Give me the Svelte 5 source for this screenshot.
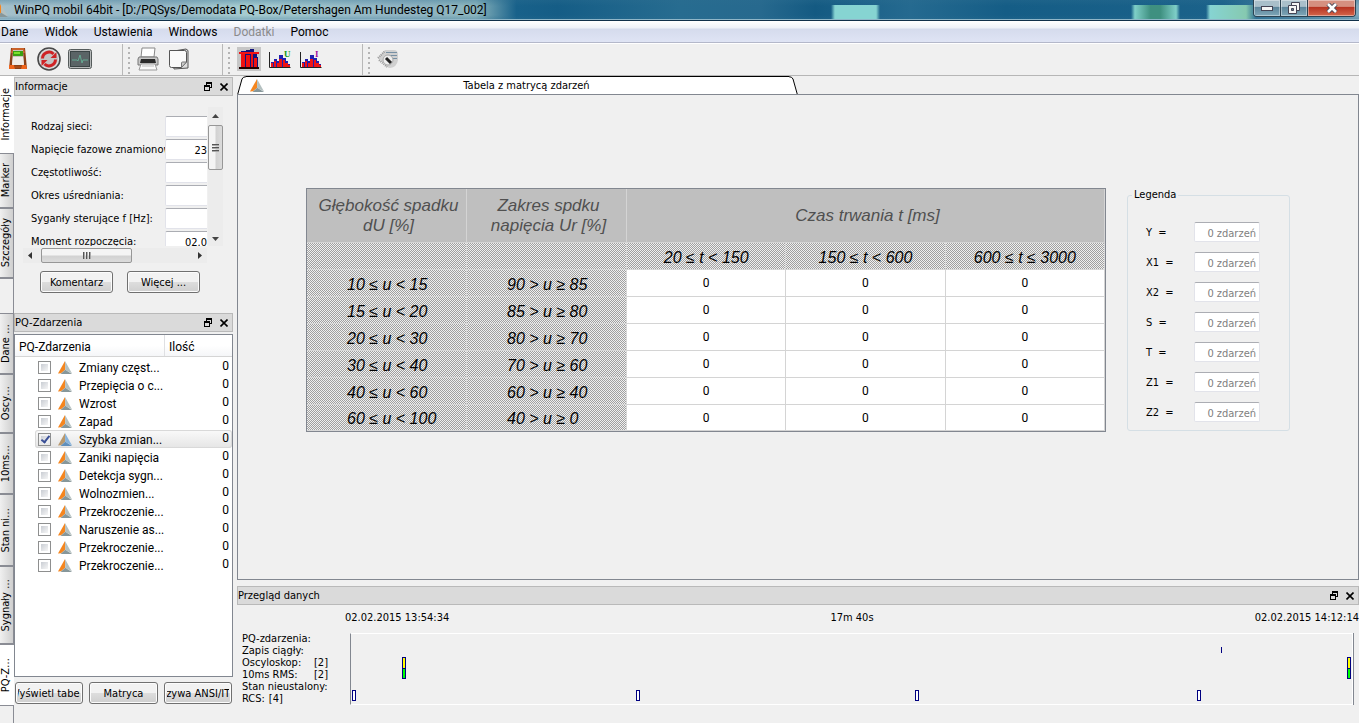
<script lang="ts">
  const menu = ['Dane', 'Widok', 'Ustawienia', 'Windows', 'Dodatki', 'Pomoc'];

  const tabsTop = [
    { label: 'Informacje', height: 78, active: true },
    { label: 'Marker', height: 55, active: false },
    { label: 'Szczegóły', height: 70, active: false }
  ];
  const tabsBottom = [
    { label: 'Dane …', height: 61, active: false },
    { label: 'Oscy…', height: 59, active: false },
    { label: '10ms…', height: 61, active: false },
    { label: 'Stan ni…', height: 72, active: false },
    { label: 'Sygnały …', height: 78, active: false },
    { label: 'PQ-Z…', height: 61, active: true }
  ];

  const fields = [
    { label: 'Rodzaj sieci:', value: '' },
    { label: 'Napięcie fazowe znamionow', value: '23' },
    { label: 'Częstotliwość:', value: '' },
    { label: 'Okres uśredniania:', value: '' },
    { label: 'Syganły sterujące f [Hz]:', value: '' },
    { label: 'Moment rozpoczęcia:', value: '02.0' }
  ];

  let events = $state([
    { name: 'Zmiany częst...', checked: false },
    { name: 'Przepięcia o c...', checked: false },
    { name: 'Wzrost', checked: false },
    { name: 'Zapad', checked: false },
    { name: 'Szybka zmian...', checked: true },
    { name: 'Zaniki napięcia', checked: false },
    { name: 'Detekcja sygn...', checked: false },
    { name: 'Wolnozmien...', checked: false },
    { name: 'Przekroczenie...', checked: false },
    { name: 'Naruszenie as...', checked: false },
    { name: 'Przekroczenie...', checked: false },
    { name: 'Przekroczenie...', checked: false }
  ]);
  const selected = 4;

  const ranges = ['20 ≤ t < 150', '150 ≤ t < 600', '600 ≤ t ≤ 3000'];
  const matrix = [
    { du: '10 ≤ u < 15', ur: '90 > u ≥ 85', counts: [0, 0, 0] },
    { du: '15 ≤ u < 20', ur: '85 > u ≥ 80', counts: [0, 0, 0] },
    { du: '20 ≤ u < 30', ur: '80 > u ≥ 70', counts: [0, 0, 0] },
    { du: '30 ≤ u < 40', ur: '70 > u ≥ 60', counts: [0, 0, 0] },
    { du: '40 ≤ u < 60', ur: '60 > u ≥ 40', counts: [0, 0, 0] },
    { du: '60 ≤ u < 100', ur: '40 > u ≥ 0', counts: [0, 0, 0] }
  ];
  const legend = ['Y', 'X1', 'X2', 'S', 'T', 'Z1', 'Z2'];

  const overview = [
    { label: 'PQ-zdarzenia:', count: '' },
    { label: 'Zapis ciągły:', count: '' },
    { label: 'Oscyloskop:', count: '[2]' },
    { label: '10ms RMS:', count: '[2]' },
    { label: 'Stan nieustalony:', count: '' },
    { label: 'RCS:', count: '[4]' }
  ];
  // at = position on the time axis in %, row = line of the overview
  const marks = [
    { at: 5.1, row: 2, kind: 'osc' },
    { at: 5.1, row: 3, kind: 'rms' },
    { at: 99.5, row: 2, kind: 'osc' },
    { at: 99.5, row: 3, kind: 'rms' },
    { at: 86.9, row: 1, kind: 'tick' },
    { at: 0.1, row: 5, kind: 'rcs' },
    { at: 28.5, row: 5, kind: 'rcs' },
    { at: 56.3, row: 5, kind: 'rcs' },
    { at: 84.5, row: 5, kind: 'rcs' }
  ];
  const rowTop = [0, 13, 23, 34, 46, 56];
</script>

{#snippet logo(on = false)}
  <svg class="logo" width="14" height="13" viewBox="0 0 14 13" aria-hidden="true">
    <path d="M7 0L0 12.600L3 12.200L7.200 8.800z" fill={on ? '#b9986c' : '#f5861f'} />
    <path d="M7 0L14 12.600L7.200 8.800z" fill={on ? '#86b3dc' : '#b4c0c0'} />
    <path d="M2.500 13L7.200 8.800L14 13z" fill={on ? '#5f8fbb' : '#87979a'} />
  </svg>
{/snippet}

{#snippet dockTitle(text: string)}
  <header class="dock-title">
    <h2>{text}</h2>
    <button aria-label="Odepnij">
      <svg width="8" height="9" viewBox="0 0 8 9" shape-rendering="crispEdges">
        <path d="M2 0h6v6H6V5h1V2H3v1H2z M0 3h6v6H0z M1 5v3h4V5z" fill="#000" fill-rule="evenodd" />
      </svg>
    </button>
    <button aria-label="Zamknij">
      <svg width="8" height="8" viewBox="0 0 8 8"><path d="M.5.5l7 7M7.5.5l-7 7" stroke="#000" stroke-width="1.6" /></svg>
    </button>
  </header>
{/snippet}

<div class="window">
  <header class="titlebar">
    {@render logo()}
    <h1>WinPQ mobil 64bit - [D:/PQSys/Demodata PQ-Box/Petershagen Am Hundesteg Q17_002]</h1>
    <div class="controls">
      <button aria-label="Minimalizuj">
        <svg width="12" height="5"><rect x=".5" y=".5" width="11" height="4" fill="#f4f4f4" stroke="#445" /></svg>
      </button>
      <button aria-label="Przywróć">
        <svg width="12" height="12" viewBox="0 0 12 12">
          <path d="M3.5.5h8v8h-8z" fill="#f4f4f4" stroke="#445" />
          <path d="M.5 3.5h8v8h-8z" fill="#f4f4f4" stroke="#445" />
          <path d="M3.5 6.5h2v2h-2z" fill="#5b8299" stroke="#445" />
        </svg>
      </button>
      <button class="close" aria-label="Zamknij okno">
        <svg width="12" height="10" viewBox="0 0 12 10">
          <path d="M2 1l8 8M10 1L2 9" stroke="#445" stroke-width="4.4" />
          <path d="M2 1l8 8M10 1L2 9" stroke="#fff" stroke-width="2.6" />
        </svg>
      </button>
    </div>
  </header>

  <nav class="menubar">
    {#each menu as m}
      <button disabled={m === 'Dodatki'}>{m}</button>
    {/each}
  </nav>

  <div class="toolbar">
    <div class="group first">
      <button aria-label="Przyrząd">
        <svg width="24" height="24" viewBox="0 0 24 24">
          <path d="M5 1h14l2 21H3z" fill="#8a4018" />
          <path d="M6 1h12l1 5H5z" fill="#c9622a" />
          <path d="M7 3h10l1 14H6z" fill="#c9c4bd" />
          <path d="M7 4h10v5H7z" fill="#39a012" />
          <path d="M8 5h6v2H8z" fill="#7be02c" />
          <path d="M7 10h10l1 8H6z" fill="#efece8" />
          <path d="M3 18h5l1 4H3z M16 18h4l1 4h-6z" fill="#f0641b" />
          <path d="M9 19h6v2H9z" fill="#a84a16" />
        </svg>
      </button>
      <button aria-label="Odśwież">
        <svg width="24" height="24" viewBox="0 0 24 24">
          <circle cx="12" cy="12" r="11" fill="#dedede" stroke="#494949" stroke-width="1.6" />
          <circle cx="12" cy="12" r="9" fill="#c4c4c4" />
          <path d="M5.500 11.500a6.500 6.500 0 0 1 11-4.500" fill="none" stroke="#cf2325" stroke-width="3" />
          <path d="M18.500 12.500a6.500 6.500 0 0 1-11 4.500" fill="none" stroke="#cf2325" stroke-width="3" />
          <path d="M19.500 5v6h-6z M4.500 19v-6h6z" fill="#cf2325" />
        </svg>
      </button>
      <button aria-label="Pomiar">
        <svg width="24" height="21" viewBox="0 0 24 21">
          <rect x="0.500" y="0.500" width="23" height="19" rx="2" fill="#b6b9b9" stroke="#555b5b" />
          <rect x="2.500" y="2.500" width="19" height="15" fill="#5a6466" stroke="#3a4445" />
          <path d="M4 11h5l1 1 2-6 2 8 1-3h5" fill="none" stroke="#63a891" />
        </svg>
      </button>
    </div>
    <div class="group print">
      <button aria-label="Drukuj">
        <svg width="22" height="24" viewBox="0 0 22 24">
          <path d="M5 1h13l-1 9H4z" fill="#fff" stroke="#888" />
          <path d="M2 10h18l1 2v6H1v-6z" fill="#c8c8c8" stroke="#777" />
          <path d="M4 12h14l1 4H3z" fill="#2a2a2a" />
          <path d="M4 17h14l2 6H2z" fill="#fafafa" stroke="#999" />
          <path d="M5 19h12" stroke="#bbb" />
        </svg>
      </button>
      <button aria-label="Kopiuj">
        <svg width="22" height="22" viewBox="0 0 22 22">
          <path d="M3 3.500L18 1l2 1.500V20l-14 1z" fill="#ddd" stroke="#555" />
          <path d="M1.500 2.500h15q2 0 2 2V14l-5 5.500h-10q-2 0-2-2z" fill="#fafafa" stroke="#555" />
          <path d="M18.500 14h-4q-1 0-1 1v4.500z" fill="#ccc" stroke="#777" />
        </svg>
      </button>
    </div>
    <div class="group charts">
      <button class="pressed" aria-label="Matryca zdarzeń">
        <svg width="22" height="22" viewBox="0 0 22 22" shape-rendering="crispEdges">
          <path d="M3 3h5v-1h4v-1h4v4h3v4h1v10H3z" fill="#12127c" />
          <path d="M3 6h4v13H3z M8 7h4v12H8z M13 6h2v13h-2z M16 10h3v9h-3z" fill="#f01010" />
          <path d="M1 4h20v2H1z" fill="#f01414" />
          <path d="M1 19h20v2H1z" fill="#200" />
        </svg>
      </button>
      {#each [{ l: 'U', c: '#149a14' }, { l: 'I', c: '#a010a0' }] as s}
        <button aria-label="Harmoniczne {s.l}">
          <svg width="24" height="22" viewBox="0 0 24 22">
            <path d="M1.500 4v15.500h21" stroke="#222" fill="none" />
            <path d="M3 14h3v5H3z M6 11h3v8H6z M9 13h2v6H9z M11 7h4v12h-4z M15 10h3v9h-3z M18 13h2v6h-2z M20 16h2v3h-2z" fill="#2020b0" />
            <path d="M3 15h2v4H3z M6 13h2v6H6z M9 15h2v4H9z M11 11h3v8h-3z M15 12h2v7h-2z M17 15h3v4h-3z M20 17h2v2h-2z" fill="#f01414" />
            <text x="16" y="9" font-family="Liberation Serif, serif" font-size="9" font-weight="700" fill={s.c}>{s.l}</text>
          </svg>
        </button>
      {/each}
    </div>
    <div class="group last">
      <button aria-label="Konfiguracja">
        <svg width="22" height="20" viewBox="0 0 22 20">
          <path d="M1 9L8 1h9q4 0 4 5v5q-1 7-8 8-3 0-6-4z" fill="#d0d0d0" />
          <path d="M1 9l7-7M2 11l8 7" stroke="#999" stroke-width="2" stroke-dasharray="1 1" />
          <path d="M9 3.500h11M10 6.500h10M13 9.500h7" stroke="#7790a4" />
          <circle cx="11" cy="11" r="5" fill="#eee" stroke="#aaa" />
          <path d="M9 9l5 5" stroke="#222" stroke-width="3" />
        </svg>
      </button>
    </div>
  </div>

  <div class="body">
    <div class="side-tabs">
      {#each tabsTop as t}
        <button class:active={t.active} style="height: {t.height}px"><span>{t.label}</span></button>
      {/each}
      <div class="spacer"></div>
      {#each tabsBottom as t}
        <button class:active={t.active} style="height: {t.height}px"><span>{t.label}</span></button>
      {/each}
    </div>

    <aside class="left">
      <section class="info">
        {@render dockTitle('Informacje')}
        <div class="scroll-area">
          <div class="fields">
            {#each fields as f, i}
              <label for="field-{i}">{f.label}</label>
              <input id="field-{i}" type="text" value={f.value} />
            {/each}
          </div>
          <div class="vbar">
            <svg width="7" height="4"><path d="M0 4l3.500-4L7 4z" fill="#444" /></svg>
            <div class="thumb"><i></i><i></i><i></i></div>
            <svg class="down" width="7" height="4"><path d="M0 0l3.500 4L7 0z" fill="#444" /></svg>
          </div>
          <div class="hbar">
            <svg width="4" height="7"><path d="M4 0L0 3.500 4 7z" fill="#333" /></svg>
            <div class="thumb"><i></i><i></i><i></i></div>
            <svg class="right" width="4" height="7"><path d="M0 0l4 3.500L0 7z" fill="#333" /></svg>
          </div>
        </div>
        <div class="info-buttons">
          <button class="push">Komentarz</button>
          <button class="push">Więcej ...</button>
        </div>
      </section>

      <section class="events">
        {@render dockTitle('PQ-Zdarzenia')}
        <div class="tree">
          <div class="tree-head"><span>PQ-Zdarzenia</span><span>Ilość</span></div>
          {#each events as e, i}
            <label class="tree-row" class:selected={i === selected}>
              <input type="checkbox" bind:checked={e.checked} />
              {@render logo(i === selected)}
              <span class="name">{e.name}</span>
              <span class="count">0</span>
            </label>
          {/each}
        </div>
        <div class="event-buttons">
          <button class="push"><span>Wyświetl tabelę</span></button>
          <button class="push"><span>Matryca</span></button>
          <button class="push"><span>Krzywa ANSI/ITIC</span></button>
        </div>
      </section>
    </aside>

    <main>
      <div class="doc-tabs">
        <button class="doc-tab">
          <svg width="9" height="19" viewBox="0 0 9 19"><path d="M0 19L5 3Q6 .5 9 .5V19z" fill="#fff" /><path d="M.500 19L5 3Q6 .700 9 .700" fill="none" stroke="#000" /></svg>
          <span class="doc-face">{@render logo()}<span>Tabela z matrycą zdarzeń</span></span>
          <svg width="9" height="19" viewBox="0 0 9 19"><path d="M9 19L4 3Q3 .5 0 .5V19z" fill="#fff" /><path d="M8.500 19L4 3Q3 .700 0 .700" fill="none" stroke="#000" /></svg>
        </button>
      </div>

      <div class="document">
        <table>
          <colgroup><col class="wide" /><col class="wide" /><col /><col /><col /></colgroup>
          <thead>
            <tr class="titles">
              <th>Głębokość spadku<br />dU [%]</th>
              <th>Zakres spdku<br />napięcia Ur [%]</th>
              <th colspan="3">Czas trwania t [ms]</th>
            </tr>
            <tr>
              <td class="hatch"></td>
              <td class="hatch"></td>
              {#each ranges as r}
                <th class="hatch range">{r}</th>
              {/each}
            </tr>
          </thead>
          <tbody>
            {#each matrix as row}
              <tr>
                <th class="hatch">{row.du}</th>
                <th class="hatch">{row.ur}</th>
                {#each row.counts as c}
                  <td>{c}</td>
                {/each}
              </tr>
            {/each}
          </tbody>
        </table>

        <fieldset>
          <legend>Legenda</legend>
          {#each legend as l}
            <div class="legend-row">
              <label for="leg-{l}">{l}&nbsp; =</label>
              <input id="leg-{l}" type="text" value="0 zdarzeń" disabled />
            </div>
          {/each}
        </fieldset>
      </div>

      <section class="overview">
        {@render dockTitle('Przegląd danych')}
        <div class="times">
          <span>02.02.2015 13:54:34</span>
          <span>17m 40s</span>
          <span>02.02.2015 14:12:14</span>
        </div>
        <div class="timeline">
          <div class="names">
            {#each overview as o}
              <div><span>{o.label}</span><span class:near={o.label === 'RCS:'}>{o.count}</span></div>
            {/each}
          </div>
          <div class="plot">
            {#each marks as m}
              <i class={m.kind} style="left: {m.at}%; top: {rowTop[m.row]}px"></i>
            {/each}
          </div>
        </div>
      </section>
    </main>
  </div>
</div>

<style>
  :global(body) {
    background: #f0f0f0;
  }
  .window {
    --ui: 'DejaVu Sans Condensed', 'Noto Sans', sans-serif;
    --sys: Roboto, 'Noto Sans', sans-serif;
    min-height: 100vh;
    display: flex;
    flex-direction: column;
    font: 11px/14px var(--ui);
    color: #000;
    overflow: hidden;
  }
  button {
    font: inherit;
    color: inherit;
    border: 0;
    padding: 0;
    background: none;
    box-sizing: border-box;
  }
  svg {
    display: block;
    flex: none;
  }
  h1,
  h2 {
    margin: 0;
    font: inherit;
  }

  .titlebar {
    display: flex;
    height: 21px;
    box-sizing: border-box;
    border-bottom: 1px solid #10304a;
    box-shadow: inset 0 -1px #8fb6c8;
    background:
      linear-gradient(90deg, transparent, #86d4d2 8%, #86d4d2 92%, transparent) 831px 5px / 49px 16px no-repeat,
      linear-gradient(90deg, transparent, #7fcfc8 8%, #3f9080 40%, #3f9080 60%, #7fcfc8 92%, transparent) 1131px 5px / 49px 16px no-repeat,
      linear-gradient(90deg, transparent, #86d4d2 8%, #86c9b0 80%, transparent) 1206px 5px / 50px 16px no-repeat,
      linear-gradient(#2c6d9055, transparent 30%, transparent 75%, #2c6d9055),
      linear-gradient(90deg, #a4c0cb, #94b6c4 12%, #a6ccd0 18%, #8fb3c2 30%, #8bb5bd 35%, #18618a 38%, #155d86 41%, #276c90 50%, #27698e 56%, #145a82 60%, #256a90 67%, #155d86 74%, #1b628a 90%, #7fa9bd);
  }
  .titlebar .logo {
    margin: 4px 6px 0 -6px;
  }
  .titlebar h1 {
    font: 12px/20px var(--sys);
    flex: 1;
    white-space: nowrap;
  }
  .controls {
    display: flex;
    height: 17px;
    margin-right: 3px;
    border: 1px solid #2b4251;
    border-top: 0;
    border-radius: 0 0 4px 4px;
    box-sizing: border-box;
    overflow: hidden;
  }
  .controls button {
    width: 27px;
    display: flex;
    align-items: center;
    justify-content: center;
    border-right: 1px solid #2b4251;
    background: linear-gradient(#a9bfca 40%, #5c859b 45%, #7fa7b8);
    box-shadow: inset 0 0 0 1px #ffffff66;
  }
  .controls .close {
    width: 47px;
    border: 0;
    background: linear-gradient(#d58f80 40%, #b63322 45%, #d4664a);
  }

  .menubar {
    display: flex;
    height: 22px;
    box-sizing: border-box;
    border-bottom: 1px solid #b4b8ca;
    background: linear-gradient(#fff, #eef1f8 7px, #d5dbed 8px, #dfe4f4);
    font: 12px/20px var(--sys);
  }
  .menubar button {
    padding: 0 8px;
  }
  .menubar button:first-child {
    padding-left: 1px;
  }
  .menubar button:disabled {
    color: #8b8b8b;
  }

  .toolbar {
    display: flex;
    height: 33px;
    box-sizing: border-box;
    border-top: 1px solid #fff;
    border-bottom: 1px solid #b6b6b6;
    background: #f0f0f0;
  }
  .group {
    display: flex;
    align-items: center;
    gap: 7px;
    box-sizing: border-box;
    padding: 0 0 1px 14px;
    border-right: 1px solid #b8b8b8;
    background: conic-gradient(#b4b4b4 0 25%, transparent 0) 3px 3px / 4px 5px repeat-y;
  }
  .first {
    width: 123px;
    padding-left: 6px;
    background: none;
  }
  .print {
    width: 100px;
    gap: 9px;
  }
  .charts {
    width: 140px;
  }
  .last {
    border: 0;
  }
  .pressed {
    background: #c6c6c6;
    padding: 1px;
  }

  .body {
    flex: 1;
    display: flex;
  }
  .side-tabs {
    width: 14px;
    flex: none;
    display: flex;
    flex-direction: column;
    box-sizing: border-box;
    border-right: 1px solid #8a8c94;
  }
  .side-tabs button {
    width: 13px;
    flex: none;
    display: flex;
    align-items: center;
    border-bottom: 2px solid #8a8c94;
    background: linear-gradient(90deg, #f0f0f0, #cfcfcf);
  }
  .side-tabs button.active {
    width: 14px;
    background: #fff;
    border-bottom-width: 1px;
  }
  .side-tabs span {
    writing-mode: vertical-rl;
    transform: rotate(180deg);
    white-space: nowrap;
    line-height: 12px;
  }
  .spacer {
    height: 35px;
    box-sizing: border-box;
    border-bottom: 1px solid #8a8c94;
  }

  .left {
    width: 219px;
    flex: none;
    margin-right: 4px;
    padding-top: 1px;
  }
  .dock-title {
    display: flex;
    align-items: center;
    height: 19px;
    box-sizing: border-box;
    border: 1px solid #b9b9b9;
    background: #dadada;
    padding-right: 4px;
    gap: 8px;
  }
  .dock-title h2 {
    flex: 1;
    padding-top: 1px;
  }
  .scroll-area {
    display: grid;
    grid-template-columns: 184px 15px;
    grid-template-rows: 139px 15px;
    gap: 2px 1px;
    padding: 11px 9px 0;
  }
  .fields {
    display: grid;
    grid-template-columns: 134px 60px;
    grid-auto-rows: 21px;
    row-gap: 2px;
    padding: 9px 0 0 8px;
    overflow: hidden;
  }
  .fields label {
    overflow: hidden;
    white-space: nowrap;
    line-height: 21px;
  }
  input[type='text'] {
    font: inherit;
    box-sizing: border-box;
    min-width: 0;
    border: 1px solid #e2e3ea;
    border-top-color: #abadb3;
    border-radius: 2px;
    background: #fff;
    text-align: right;
    padding: 2px 3px 0;
  }
  .fields input {
    padding-right: 17px;
  }
  .vbar,
  .hbar {
    display: flex;
    align-items: center;
    background: #ececec;
  }
  .vbar {
    flex-direction: column;
    padding: 7px 0 5px;
    box-sizing: border-box;
  }
  .hbar {
    padding: 0 5px;
  }
  .thumb {
    display: flex;
    align-items: center;
    justify-content: center;
    gap: 1px;
    box-sizing: border-box;
    border: 1px solid #979797;
    border-radius: 2px;
  }
  .vbar .thumb {
    flex-direction: column;
    width: 15px;
    height: 45px;
    margin-top: 7px;
    background: linear-gradient(90deg, #f4f4f4 45%, #d2d2d2 55%, #dcdcdc);
  }
  .hbar .thumb {
    width: 91px;
    height: 15px;
    margin-left: 9px;
    background: linear-gradient(#f4f4f4 45%, #d2d2d2 55%, #dcdcdc);
  }
  .vbar i {
    width: 7px;
    height: 1px;
    border-bottom: 1px solid #aaa;
    background: #555;
  }
  .hbar i {
    width: 1px;
    height: 7px;
    border-right: 1px solid #aaa;
    background: #555;
  }
  .down {
    margin-top: auto;
  }
  .right {
    margin-left: auto;
  }
  .push {
    height: 22px;
    padding-top: 1px;
    border: 1px solid #707070;
    border-radius: 3px;
    background: linear-gradient(#f2f2f2 48%, #dddddd 52%, #cfcfcf);
    box-shadow: inset 0 0 0 1px #fcfcfc;
    overflow: hidden;
  }
  .info-buttons {
    display: flex;
    gap: 14px;
    padding: 8px 0 0 26px;
  }
  .info-buttons .push {
    width: 73px;
  }
  .events {
    margin-top: 20px;
  }
  .tree {
    height: 343px;
    margin-top: 2px;
    box-sizing: border-box;
    border: 1px solid #828790;
    background: #fff;
    font: 12px/18px var(--sys);
  }
  .tree-head {
    display: flex;
    height: 22px;
    box-sizing: border-box;
    border-bottom: 1px solid #d5d5d5;
    background: linear-gradient(#fff 50%, #f5f6f8);
    line-height: 24px;
    margin-bottom: 1px;
  }
  .tree-head span {
    padding-left: 4px;
  }
  .tree-head span:first-child {
    width: 145px;
    border-right: 1px solid #dfe0e3;
  }
  .tree-row {
    display: flex;
    align-items: center;
    height: 18px;
    box-sizing: border-box;
    margin-left: 20px;
    padding: 0 3px;
    border-radius: 3px;
  }
  .tree-row.selected {
    background: linear-gradient(#fafafa, #e5e5e5);
    box-shadow: inset 0 0 0 1px #d9d9d9;
  }
  .tree-row .name {
    flex: 1;
    margin-left: 7px;
    padding-top: 1px;
  }
  .tree-row .count {
    margin-top: -2px;
  }
  input[type='checkbox'] {
    appearance: none;
    width: 13px;
    height: 13px;
    margin: 0 7px 0 0;
    border: 1px solid #8e8f8f;
    background: linear-gradient(135deg, #c9cdd3, #f6f6f6) content-box #f4f4f4;
    padding: 2px;
    box-sizing: border-box;
  }
  input[type='checkbox']:checked::after {
    content: '';
    display: block;
    width: 3px;
    height: 7px;
    margin: -2px 0 0 2px;
    border: solid #3a4f96;
    border-width: 0 2px 2px 0;
    transform: rotate(38deg);
  }
  .event-buttons {
    display: grid;
    grid-template-columns: repeat(3, 1fr);
    gap: 6px;
    padding: 5px 1px 0;
  }
  .event-buttons .push {
    display: flex;
    justify-content: center;
    padding: 4px 2px 0;
  }
  .event-buttons span {
    white-space: nowrap;
    overflow: hidden;
    display: flex;
    justify-content: center;
    min-width: 100%;
  }

  main {
    flex: 1;
    min-width: 0;
    display: flex;
    flex-direction: column;
  }
  .doc-tabs {
    height: 18px;
  }
  .doc-tab {
    display: flex;
    width: 50%;
    height: 19px;
  }
  .doc-face {
    flex: 1;
    display: flex;
    align-items: center;
    height: 19px;
    box-sizing: border-box;
    border-top: 1px solid #000;
    background: #fff;
    padding: 0 0 2px 4px;
  }
  .doc-face span {
    flex: 1;
    text-align: center;
    padding-top: 2px;
  }
  .document {
    flex: 1;
    display: flex;
    align-items: flex-start;
    gap: 21px;
    border: 1px solid #828790;
    padding: 93px 68px 0;
  }

  table {
    border-collapse: separate;
    border-spacing: 0;
    table-layout: fixed;
    width: 800px;
    flex: none;
    box-sizing: border-box;
    border: 1px solid #828790;
    background: #fff;
  }
  .wide {
    width: 160px;
  }
  th,
  td {
    height: 27px;
    box-sizing: border-box;
    padding: 0;
    border: solid #d4d4d4;
    border-width: 0 1px 1px 0;
    text-align: center;
    font-weight: 400;
  }
  td {
    font: 12px/14px var(--sys);
  }
  th {
    font: italic 16px/20px 'Liberation Sans', Arial, sans-serif;
    text-align: left;
    padding: 3px 0 0 40px;
  }
  .titles th {
    height: 54px;
    font-size: 17px;
    background: #bfbfbf;
    color: #505050;
    text-align: center;
    padding: 0 0 0 4px;
  }
  .hatch {
    background: repeating-conic-gradient(#a0a0a0 0 25%, #f0f0f0 0 50%) 0 0 / 2px 2px;
    border-color: #d8d8d8;
  }
  th.range {
    text-align: center;
    padding-left: 0;
  }
  tbody tr:last-child > * {
    height: 26px;
  }
  fieldset {
    width: 164px;
    box-sizing: border-box;
    margin: 0;
    padding: 20px 0 8px 18px;
    border: 1px solid #d5dfe5;
    border-radius: 3px;
  }
  legend {
    margin-left: -14px;
    padding: 0 2px;
  }
  .legend-row {
    display: flex;
    align-items: center;
    margin-bottom: 10px;
    height: 20px;
  }
  .legend-row:last-child {
    margin: 0;
  }
  .legend-row label {
    width: 48px;
    padding-top: 1px;
    white-space: pre;
  }
  .legend-row input {
    width: 66px;
    height: 20px;
    color: #808080;
  }

  .overview {
    margin-top: 6px;
    padding-bottom: 18px;
  }
  .times {
    display: flex;
    justify-content: space-between;
    padding: 6px 0 8px 108px;
  }
  .timeline {
    display: flex;
    padding: 0 6px 0 5px;
  }
  .names {
    width: 108px;
    line-height: 12px;
  }
  .names div {
    display: flex;
    width: 86px;
    justify-content: space-between;
    white-space: nowrap;
  }
  .names .near {
    margin-right: auto;
    margin-left: 4px;
  }
  .plot {
    flex: 1;
    position: relative;
    border: 1px solid #fff;
    border-left-color: #828790;
    box-shadow: 1px 0 #828790;
  }
  .plot i {
    position: absolute;
    box-sizing: border-box;
    width: 4px;
    height: 11px;
    border: 1px solid #000080;
    background: #fff;
  }
  .plot .osc {
    background: #ff0;
    height: 12px;
  }
  .plot .rms {
    background: #0f0;
  }
  .plot .tick {
    width: 1px;
    height: 6px;
    border-width: 0 0 0 1px;
  }
</style>
